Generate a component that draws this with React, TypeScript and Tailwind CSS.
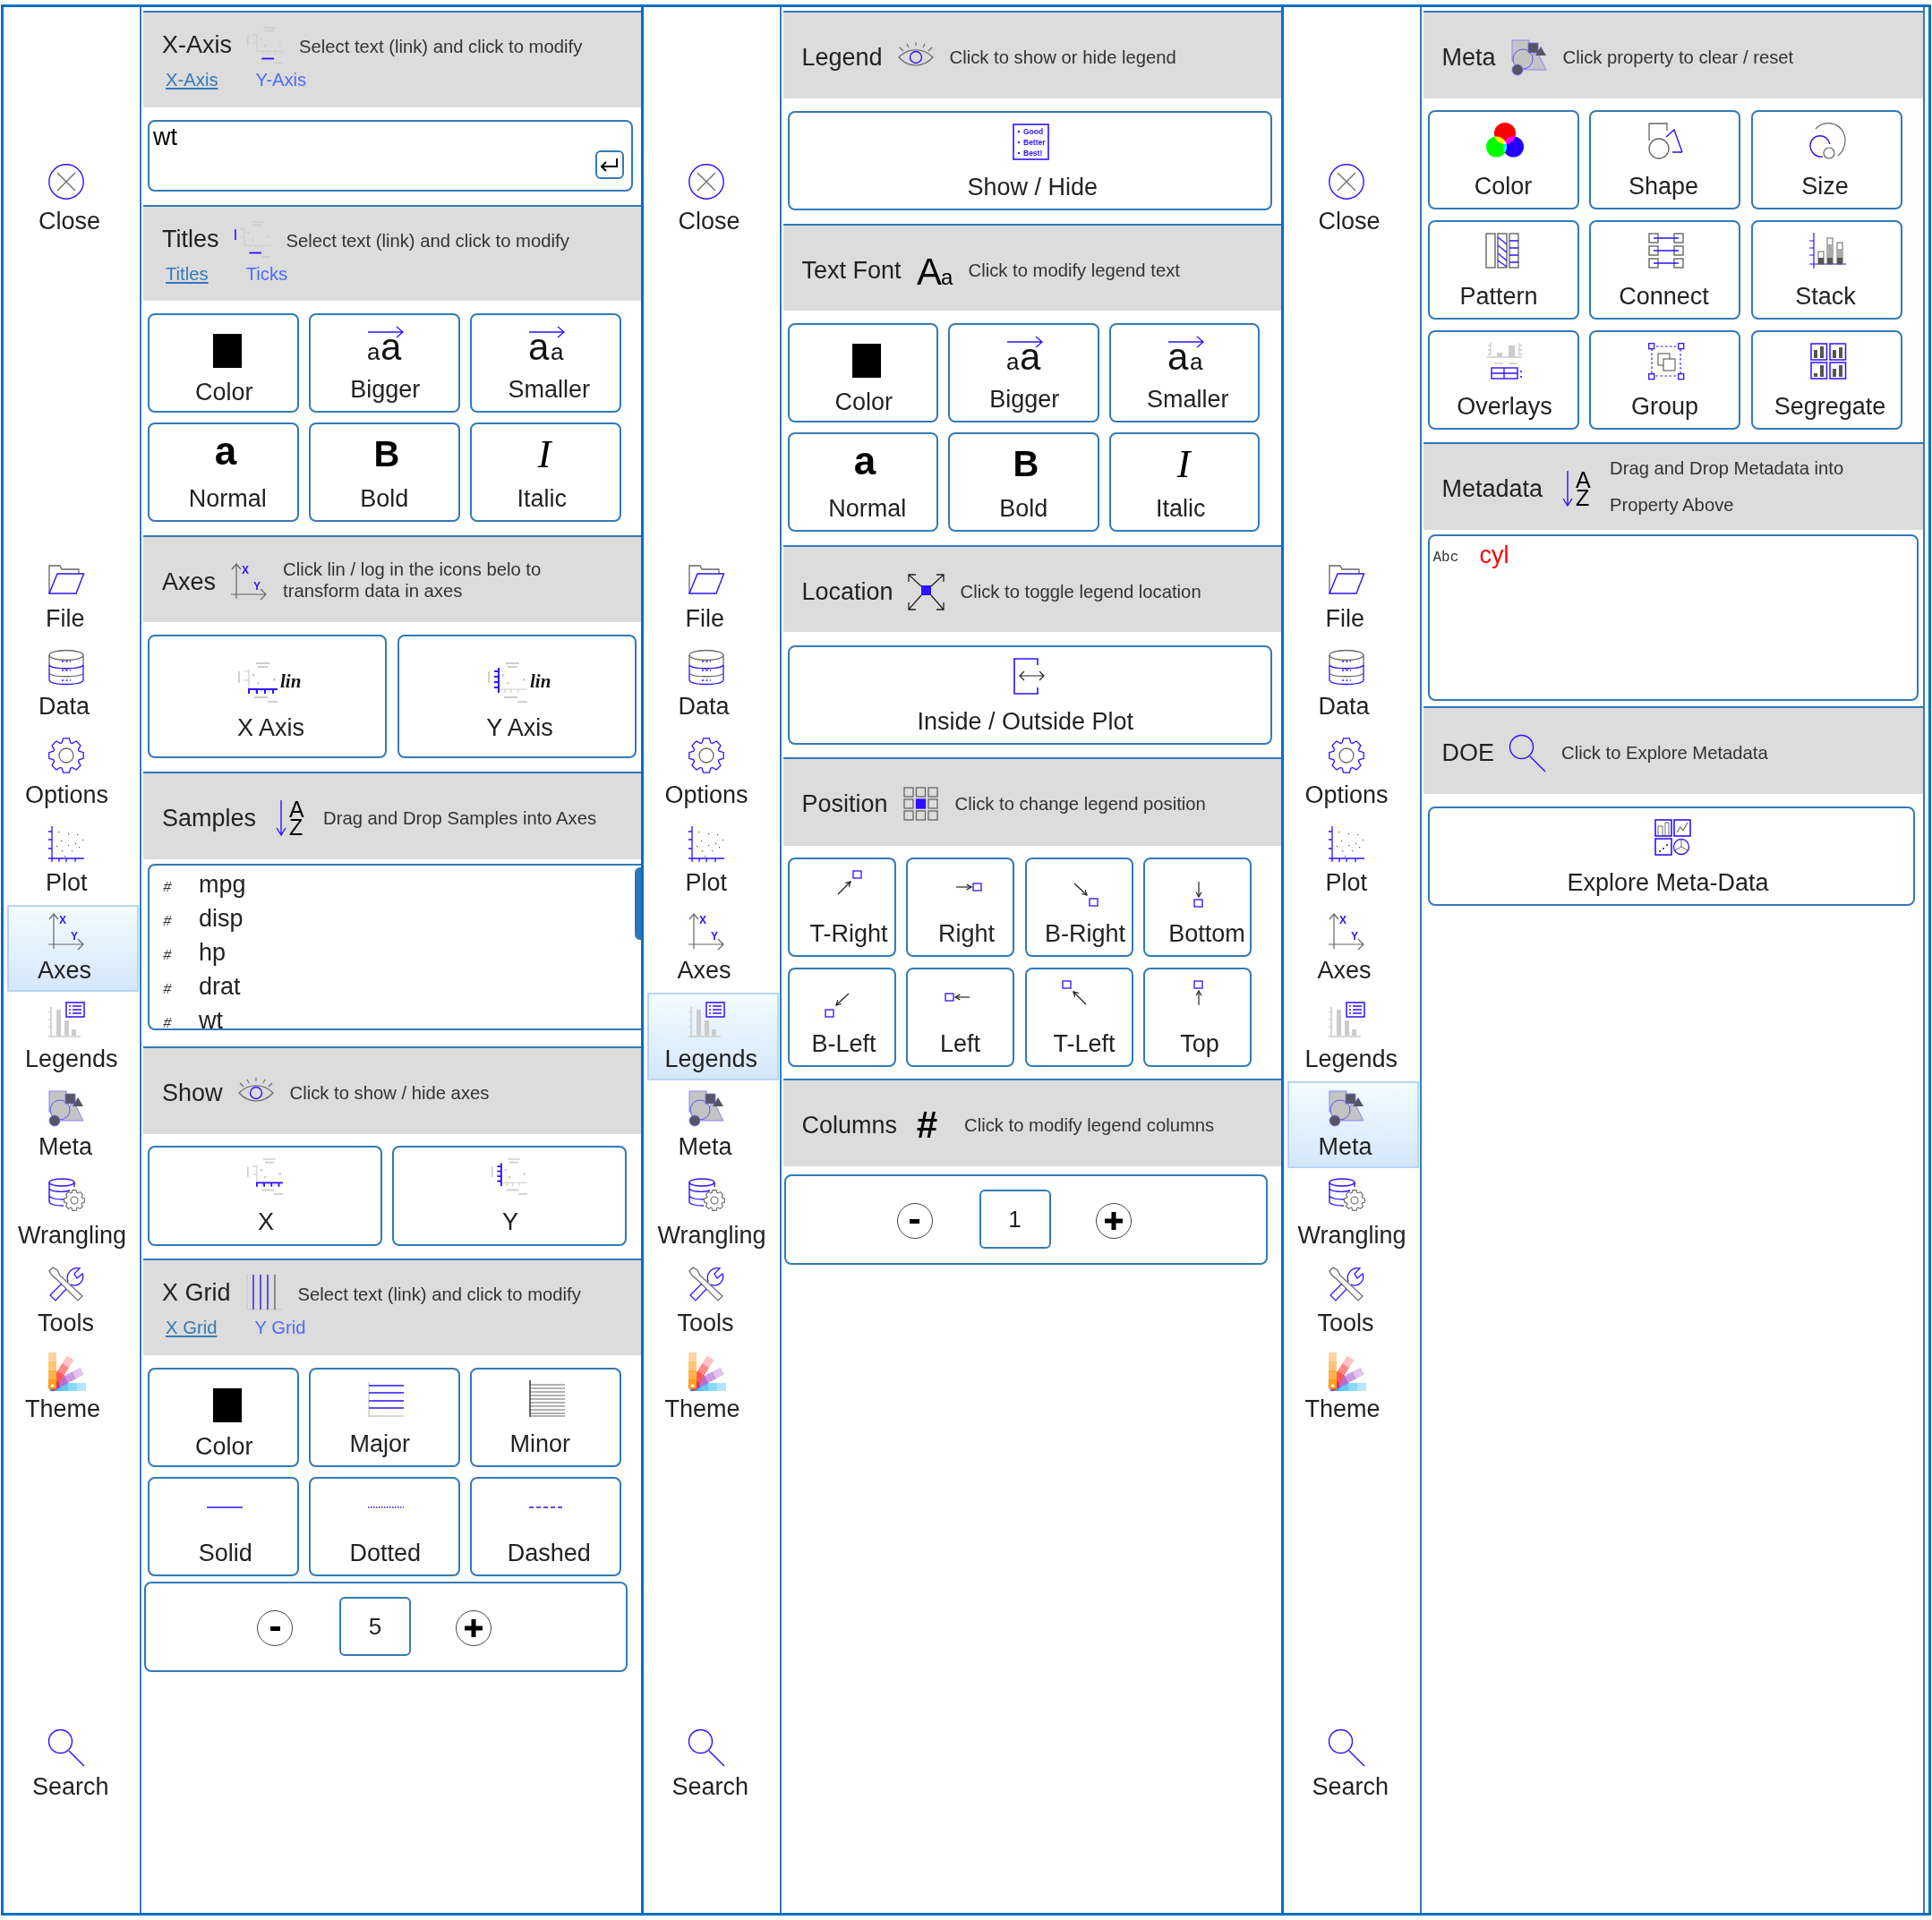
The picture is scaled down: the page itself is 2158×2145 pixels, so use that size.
import React from "react";

const B = "#2d12ff";
const G = "#666666";
const L = "#cccccc";

function gear(cx: number, cy: number, r1: number, r2: number, n: number) {
  const pts: string[] = [];
  for (let i = 0; i < n; i++) {
    const a = (i / n) * Math.PI * 2;
    const w = (Math.PI * 2) / n;
    const seq: [number, number][] = [
      [r2, a - w * 0.42],
      [r1, a - w * 0.22],
      [r1, a + w * 0.22],
      [r2, a + w * 0.42],
    ];
    for (const [r, t] of seq) pts.push(`${(cx + r * Math.cos(t)).toFixed(2)} ${(cy + r * Math.sin(t)).toFixed(2)}`);
  }
  return "M" + pts.join("L") + "Z";
}

type SP = { w?: number; h?: number; vb?: string; children?: React.ReactNode };
const S = ({ w = 40, h = 40, vb, children }: SP) => (
  <svg width={w} height={h} viewBox={vb ?? `0 0 ${w} ${h}`} fill="none" className="block shrink-0 overflow-visible">
    {children}
  </svg>
);

const CloseI = () => (
  <S>
    <circle cx="20" cy="20" r="19.2" stroke={B} strokeWidth="1.4" />
    <path d="M10 10L30 30M30 10L10 30" stroke={G} strokeWidth="1.2" />
  </S>
);
const FileI = () => (
  <S>
    <path d="M1 36V5H13L15 9H34V14" stroke={G} strokeWidth="1.3" />
    <path d="M1 36L10 14H39.5L31 36Z" stroke={B} strokeWidth="1.4" />
  </S>
);
const DataI = () => (
  <S>
    <ellipse cx="20" cy="6" rx="19" ry="5.5" stroke={G} strokeWidth="1.3" />
    <path d="M1 6V17C4 22 36 22 39 17V6" stroke={G} strokeWidth="1.3" />
    <path d="M1 17C4 22 36 22 39 17M1 17V34C4 40 36 40 39 34V17" stroke={B} strokeWidth="1.3" />
    <path d="M1 26C4 31 36 31 39 26" stroke={G} strokeWidth="1.3" />
    <path d="M15 13H25M15 23H25M15 34H25" stroke={B} strokeWidth="1.4" strokeDasharray="2 2.5" />
  </S>
);
const OptionsI = () => (
  <S>
    <path d={gear(20, 20, 19.5, 15, 8)} stroke={B} strokeWidth="1.3" />
    <circle cx="20" cy="20" r="8" stroke={G} strokeWidth="1.3" />
  </S>
);
const PlotI = () => (
  <S>
    <path d="M4 0V40M0 36H40M0 6H4M0 15H4M0 25H4M12 36V40M20 36V40M30 36V40" stroke={B} strokeWidth="1.3" />
    {[[11, 6], [22, 8], [32, 9], [38, 15], [30, 19], [22, 21], [14, 16], [15, 27], [26, 27], [34, 23], [18, 33], [9, 22]].map(([x, y], i) => (
      <rect key={i} x={x} y={y} width="1.2" height="1.2" fill="#555" />
    ))}
  </S>
);
const AxesI = () => (
  <S>
    <path d="M6 0V39" stroke={G} strokeWidth="1.2" />
    <path d="M1 6L6 0L11 6M0 34H39M33 28L39 34L33 40" stroke={G} strokeWidth="1.2" />
    <text x="12" y="11" fontSize="12" fontWeight="700" fill={B}>X</text>
    <text x="25" y="29" fontSize="12" fontWeight="700" fill={B}>Y</text>
  </S>
);
const LegendsI = () => (
  <S>
    <path d="M3 6V39M0 39H36" stroke={L} strokeWidth="1.6" />
    <path d="M0 12H3M0 20H3M0 28H3" stroke={L} strokeWidth="1" />
    <rect x="9" y="9" width="5" height="29" fill={L} />
    <rect x="18" y="21" width="5" height="17" fill={L} />
    <rect x="26" y="31" width="5" height="7" fill={L} />
    <rect x="20" y="1" width="20" height="16" fill="#fff" stroke={B} strokeWidth="1.5" />
    <path d="M23 5H25M27 5H37M23 9H25M27 9H37M23 13H25M27 13H37" stroke={B} strokeWidth="1.3" />
  </S>
);
const MetaI = () => (
  <S>
    <rect x="1" y="1" width="19" height="23" fill="#c4c4c4" stroke="#8b86ee" strokeWidth="1" />
    <path d="M28 12L39 34H14Z" fill="#c4c4c4" stroke="#8b86ee" strokeWidth="1" />
    <ellipse cx="13" cy="22" rx="11" ry="11" fill="#c4c4c4" stroke="#5c55f0" strokeWidth="1" />
    <rect x="19" y="4" width="11" height="11" fill="#555566" stroke="#7771ee" strokeWidth="0.8" />
    <path d="M33 8L39 18H27Z" fill="#555566" />
    <ellipse cx="7" cy="34" rx="6" ry="6" fill="#555566" stroke="#7771ee" strokeWidth="0.8" />
  </S>
);
const WranglingI = () => (
  <S>
    <ellipse cx="15" cy="5" rx="14" ry="4" stroke={B} strokeWidth="1.4" />
    <path d="M1 5V27C3 31 12 31 17 31M29 5V10M1 12C3 16 18 16 24 14M1 20C3 24 12 24 17 24" stroke={B} strokeWidth="1.4" />
    <path d={gear(29, 25, 11.5, 9, 8)} stroke={G} strokeWidth="1.1" fill="#fff" />
    <circle cx="29" cy="25" r="4" stroke={G} strokeWidth="1.1" />
  </S>
);
const ToolsI = () => (
  <S>
    <path d="M1 5L5 1L10 4L13 10L38 33L33 38L9 14L4 10Z" stroke={G} strokeWidth="1.2" fill="none" />
    <path d="M20 25L8 38L2 32L15 19" stroke={B} strokeWidth="1.2" />
    <path d="M22 17C19 8 26 0 35 2L29 8L32 13L38 8C41 16 33 24 25 20" stroke={B} strokeWidth="1.3" />
  </S>
);
const ThemeI = () => {
  const strips = [
    { a: 0, c: ["#ffd3a0", "#ffc678", "#ffb347", "#ff9f1c"] },
    { a: 32, c: ["#ffc1c1", "#ff8a8a", "#ff5a5a", "#f0303a"] },
    { a: 62, c: ["#e3c3ec", "#cf9ae0", "#b96cd0", "#9d3bc0"] },
    { a: 90, c: ["#b5e6fb", "#8ad8f8", "#5fc8f4", "#35b4ee"] },
  ];
  return (
    <div className="-mt-[2px]">
      <S w={40} h={42}>
        {strips.slice().reverse().map((s) => (
          <g key={s.a} transform={`rotate(${s.a} 4 38)`}>
            {s.c.map((c, i) => (
              <rect key={i} x="0" y={i * 10} width="9" height="10.5" fill={c} />
            ))}
          </g>
        ))}
        <circle cx="4.5" cy="37" r="1.8" fill="#fff" />
      </S>
    </div>
  );
};
const SearchI = () => (
  <S w={40} h={41}>
    <circle cx="13.5" cy="13.5" r="13" stroke={B} strokeWidth="1.4" />
    <path d="M23 24L40 41" stroke={B} strokeWidth="1.4" />
  </S>
);

const PlotBody = ({ xBlue, yBlue, labelBlue, titleBlue }: { xBlue?: boolean; yBlue?: boolean; labelBlue?: boolean; titleBlue?: boolean }) => (
  <>
    <path d="M20 1H35M22 5H33" stroke={L} strokeWidth="1.8" />
    <path d="M1 10V23" stroke={titleBlue ? B : L} strokeWidth="1.8" />
    <path d="M12 8V30M7 10H12M7 20H12" stroke={L} strokeWidth="1.2" />
    <path d="M12 30H44M19 30V34M26 30V34M34 30V34" stroke={L} strokeWidth="1.2" />
    <rect x="16" y="13" width="2.5" height="2.5" fill={L} />
    <rect x="21" y="22" width="2.5" height="2.5" fill={L} />
    <rect x="39" y="18" width="2.5" height="2.5" fill={L} />
    <path d="M18 39H33" stroke={labelBlue ? B : L} strokeWidth="2" />
    <path d="M33 44H44" stroke={L} strokeWidth="1.8" />
    {xBlue && <path d="M11 30H44M12 30V35M21 30V35M30 30V35M39 30V35" stroke={B} strokeWidth="2" />}
    {yBlue && <path d="M12 6V34M7 10H12M7 16H12M7 22H12M7 28H12" stroke={B} strokeWidth="2" />}
  </>
);
const PlotMini = (p: { xBlue?: boolean; yBlue?: boolean; labelBlue?: boolean; titleBlue?: boolean }) => (
  <S w={40} h={41} vb="0 0 44 45">
    <PlotBody {...p} />
  </S>
);
const PlotLin = (p: { xBlue?: boolean; yBlue?: boolean }) => (
  <S w={69} h={45} vb="0 0 69 45">
    <PlotBody {...p} />
    <text x="47" y="28" fontSize="21" fontStyle="italic" fontWeight="700" fill="#111" className="font-['Liberation_Serif',serif]">lin</text>
  </S>
);
const EyeI = () => (
  <div className="-mt-[6px]">
    <S w={40} h={28}>
      <path d="M1 17C12 6 28 6 39 17C28 29 12 29 1 17Z" stroke={G} strokeWidth="1.2" />
      <circle cx="20" cy="17" r="6.5" stroke={B} strokeWidth="1.4" />
      <path d="M20 0V4M10 2L12 6M30 2L28 6M2 6L6 10M38 6L34 10" stroke={G} strokeWidth="1.1" />
    </S>
  </div>
);
const AzI = () => (
  <S>
    <path d="M11 0V38M6 31L11 39L16 31" stroke={B} strokeWidth="1.4" />
    <text x="20" y="19" fontSize="25" fill="#000">A</text>
    <text x="20" y="39" fontSize="25" fill="#000">Z</text>
  </S>
);
const AxesHeadI = AxesI;
const GridVI = () => (
  <S>
    <path d="M1 0V39H40" stroke={L} strokeWidth="1.6" />
    <path d="M8 0V39M16 0V39M24 0V39" stroke={B} strokeWidth="1.4" />
    <path d="M32 0V39" stroke={G} strokeWidth="1.4" />
  </S>
);
const AaI = () => (
  <S>
    <text x="0" y="36" fontSize="42" fill="#000">A</text>
    <text x="27" y="36" fontSize="24" fill="#000">a</text>
  </S>
);
const LocationI = () => (
  <S w={41} h={41}>
    <rect x="15" y="13" width="11" height="11" fill={B} />
    <path d="M15 14L1 1M1 9V1H9M26 14L40 1M32 1H40V9M15 24L1 40M1 32V40H9M26 24L40 40M32 40H40V32" stroke="#222" strokeWidth="1.3" />
  </S>
);
const PositionI = () => (
  <S w={39} h={38}>
    {[0, 1, 2].flatMap((r) =>
      [0, 1, 2].map((c) => (
        <rect
          key={`${r}${c}`}
          x={1 + c * 13.5}
          y={1 + r * 13}
          width="10"
          height="10"
          fill={r === 1 && c === 1 ? B : "none"}
          stroke={r === 1 && c === 1 ? B : G}
          strokeWidth="1.3"
        />
      ))
    )}
  </S>
);
const BlackSquare = () => <div className="w-[32px] h-[38px] bg-black mt-[9px]" />;
const BiggerI = () => (
  <S w={40} h={41}>
    <path d="M0 7H39M32 1L39 7L32 13" stroke={B} strokeWidth="1.3" />
    <text x="-1" y="38" fontSize="26" fill="#111">a</text>
    <text x="14" y="38" fontSize="42" fill="#111">a</text>
  </S>
);
const SmallerI = () => (
  <S w={40} h={41}>
    <path d="M0 7H39M32 1L39 7L32 13" stroke={B} strokeWidth="1.3" />
    <text x="-1" y="38" fontSize="42" fill="#111">a</text>
    <text x="24" y="38" fontSize="26" fill="#111">a</text>
  </S>
);
const NormalI = () => (
  <S w={40} h={41}>
    <text x="20" y="33" fontSize="44" fontWeight="700" textAnchor="middle" fill="#000">a</text>
  </S>
);
const BoldI = () => (
  <S w={40} h={41}>
    <text x="20" y="35" fontSize="40" fontWeight="700" textAnchor="middle" fill="#000">B</text>
  </S>
);
const ItalicI = () => (
  <S w={40} h={41}>
    <text x="20" y="36" fontSize="44" fontStyle="italic" textAnchor="middle" fill="#000" className="font-['Liberation_Serif',serif]">I</text>
  </S>
);
const MajorI = () => (
  <S w={40} h={41}>
    <path d="M1 2V41M0 40H40" stroke={L} strokeWidth="1.4" />
    <path d="M1 6H40M1 14H40M1 23H40M1 31H40" stroke={B} strokeWidth="1.3" />
  </S>
);
const MinorI = () => (
  <S w={40} h={41}>
    <path d="M1 0V41" stroke={G} strokeWidth="2" />
    <path d="M1 5H40M1 9H40M1 13H40M1 17H40M1 21H40M1 25H40M1 29H40M1 33H40M1 37H40M1 40H40" stroke={G} strokeWidth="1.1" />
  </S>
);
const LineI = ({ dash }: { dash?: string }) => (
  <S w={40} h={41}>
    <path d="M0 20H40" stroke={B} strokeWidth="1.6" strokeDasharray={dash} />
  </S>
);
const EnterI = () => (
  <S w={22} h={18}>
    <path d="M19 2V11H2M7 6L2 11L7 16" stroke="#000" strokeWidth="2" />
  </S>
);
const ShowHideI = () => (
  <S w={41} h={41}>
    <rect x="1" y="1" width="39" height="39" stroke={B} strokeWidth="1.6" />
    <g fill={B} fontSize="8.5" fontWeight="700">
      <rect x="6" y="8" width="2" height="2" />
      <rect x="6" y="20" width="2" height="2" />
      <rect x="6" y="32" width="2" height="2" />
      <text x="12" y="12">Good</text>
      <text x="12" y="24">Better</text>
      <text x="12" y="36">Best!</text>
    </g>
  </S>
);
const InOutI = () => (
  <S w={36} h={41}>
    <path d="M27 8V1H1V40H27V33" stroke={B} strokeWidth="1.6" />
    <path d="M7 20H34M12 15L7 20L12 25M29 15L34 20L29 25" stroke="#222" strokeWidth="1.2" />
  </S>
);

type Dir = { sq: [number, number]; l: [number, number, number, number] };
const Head = ({ l }: { l: [number, number, number, number] }) => {
  const a = Math.atan2(l[3] - l[1], l[2] - l[0]);
  const p = (d: number) => `${(l[2] - 6 * Math.cos(a + d)).toFixed(2)} ${(l[3] - 6 * Math.sin(a + d)).toFixed(2)}`;
  return <path d={`M${p(0.5)}L${l[2]} ${l[3]}L${p(-0.5)}`} stroke="#222" strokeWidth="1.2" />;
};
const PosI = ({ sq, l }: Dir) => (
  <S w={28} h={41}>
    <rect x={sq[0]} y={sq[1]} width="9" height="8" stroke={B} strokeWidth="1.3" />
    <path d={`M${l[0]} ${l[1]}L${l[2]} ${l[3]}`} stroke="#222" strokeWidth="1.2" />
    <Head l={l} />
  </S>
);

const RgbI = () => (
  <S>
    <g className="isolate">
      <circle cx="20" cy="12" r="12" fill="#ff0000" className="mix-blend-screen" />
      <circle cx="10.5" cy="27" r="11.5" fill="#00ff00" className="mix-blend-screen" />
      <circle cx="29.5" cy="27" r="11.5" fill="#2200ff" className="mix-blend-screen" />
    </g>
  </S>
);
const ShapeI = () => (
  <S>
    <path d="M1 20V1H21V9" stroke={G} strokeWidth="1.3" />
    <path d="M38 33H27M20 16L29 8L38 33" stroke={B} strokeWidth="1.4" />
    <circle cx="12" cy="29" r="11" stroke={G} strokeWidth="1.3" />
  </S>
);
const SizeI = () => (
  <S>
    <path d="M6 7C16 -5 39 0 39 20C39 28 36 33 31 37" stroke={G} strokeWidth="1.2" />
    <path d="M14 38C6 39 0 33 0 25C1 12 19 11 22 24" stroke={B} strokeWidth="1.4" />
    <circle cx="21" cy="34" r="6" stroke={G} strokeWidth="1.2" />
  </S>
);
const PatternI = () => (
  <S>
    <rect x="1" y="1" width="10" height="38" stroke={G} strokeWidth="1.4" />
    <rect x="14" y="1" width="10" height="38" stroke={G} strokeWidth="1.4" />
    <rect x="27" y="1" width="10" height="38" stroke={G} strokeWidth="1.4" />
    <path d="M14 5L24 13M14 14L24 22M14 23L24 31M14 31L24 38" stroke={B} strokeWidth="1.3" />
    <path d="M27 9H37M27 17H37M27 25H37M27 33H37" stroke={B} strokeWidth="1.3" />
  </S>
);
const ConnectI = () => (
  <S>
    {[1, 15, 29].flatMap((y) =>
      [1, 29].map((x) => <rect key={`${x}${y}`} x={x} y={y} width="10" height="10" stroke={G} strokeWidth="1.4" />)
    )}
    <path d="M6 6H34M6 20H34M6 34H34" stroke={B} strokeWidth="1.3" />
  </S>
);
const StackI = () => (
  <S w={41} h={41}>
    <path d="M5 0V40M0 35H41M0 9H5M0 17H5M0 25H5" stroke={B} strokeWidth="1.2" />
    {[
      [10, 21],
      [20, 6],
      [31, 11],
    ].map(([x, y], i) => (
      <g key={i}>
        <rect x={x} y={y} width="6" height={35 - y} stroke={G} strokeWidth="1" />
        <rect x={x} y={y + 7} width="6" height={28 - y - 7 + 0.5} fill="#aaa" />
        <rect x={x} y={28} width="6" height="7" fill="#555" />
      </g>
    ))}
  </S>
);
const OverlaysI = () => (
  <S w={40} h={41}>
    <path d="M4 0V14M1 3H4M1 8H4M1 13H4M36 0V14M36 3H39M36 8H39M36 13H39M0 16H39" stroke={L} strokeWidth="1.3" />
    <rect x="11" y="11" width="6" height="5" fill={L} />
    <rect x="24" y="3" width="7" height="13" fill={L} />
    <path d="M8 23H18M24 23H33" stroke={L} strokeWidth="1.4" />
    <rect x="5" y="28" width="29" height="12" stroke={B} strokeWidth="1.4" />
    <path d="M5 34H34M19 28V40" stroke={B} strokeWidth="1.3" />
    <path d="M38 31V33M38 37V39" stroke={B} strokeWidth="1.6" />
  </S>
);
const GroupI = () => (
  <S w={40} h={41}>
    <rect x="4" y="4" width="32" height="33" stroke={B} strokeWidth="1.2" strokeDasharray="2.5 2.5" />
    {[[0, 0], [33, 0], [0, 34], [33, 34]].map(([x, y]) => (
      <rect key={`${x}${y}`} x={x + 0.7} y={y + 0.7} width="6" height="6" fill="#fff" stroke={B} strokeWidth="1.3" />
    ))}
    <rect x="11" y="12" width="13" height="13" stroke={G} strokeWidth="1.2" />
    <rect x="17" y="18" width="13" height="13" fill="#fff" stroke={G} strokeWidth="1.2" />
  </S>
);
const SegregateI = () => (
  <S w={40} h={41}>
    {[[1, 1], [22, 1], [1, 22], [22, 22]].map(([x, y], i) => (
      <g key={i}>
        <rect x={x} y={y} width="17.5" height="18" stroke={B} strokeWidth="1.5" />
        <rect x={x + 3} y={y + (i === 2 ? 12 : 7)} width="4" height={i === 2 ? 4 : 9} fill="#555" />
        <rect x={x + 10} y={y + (i === 1 ? 4 : 3)} width="4" height={i === 1 ? 12 : 13} fill="#555" />
      </g>
    ))}
  </S>
);
const ExploreI = () => (
  <S w={40} h={41}>
    <rect x="1" y="1" width="18" height="18" stroke={B} strokeWidth="1.6" />
    <rect x="22" y="1" width="18" height="18" stroke={B} strokeWidth="1.6" />
    <rect x="1" y="22" width="18" height="18" stroke={B} strokeWidth="1.6" />
    <circle cx="30" cy="31" r="8.5" stroke={B} strokeWidth="1.3" />
    <path d="M30 22V31L37 35M30 31L23 35" stroke={G} strokeWidth="1" />
    <path d="M4 18V8H9V18M12 18V4H16V18" stroke={G} strokeWidth="1" />
    <path d="M25 15L29 9L32 13L37 4" stroke={G} strokeWidth="1.2" />
    <path d="M5 36H7M9 33H11M13 29H15" stroke="#555" strokeWidth="2" />
  </S>
);

/* ---------- layout pieces ---------- */

const NAV = [
  { label: "File", I: FileI, l: "ml-[41px]" },
  { label: "Data", I: DataI, l: "ml-[33px]" },
  { label: "Options", I: OptionsI, l: "ml-[18px]" },
  { label: "Plot", I: PlotI, l: "ml-[41px]" },
  { label: "Axes", I: AxesI, l: "ml-[32px]" },
  { label: "Legends", I: LegendsI, l: "ml-[18px]" },
  { label: "Meta", I: MetaI, l: "ml-[33px]" },
  { label: "Wrangling", I: WranglingI, l: "ml-[10px]" },
  { label: "Tools", I: ToolsI, l: "ml-[32px]" },
  { label: "Theme", I: ThemeI, l: "ml-[18px]" },
];

const NavItem = ({ label, I, l, active }: { label: string; I: React.FC; l: string; active?: boolean }) => (
  <div
    className={
      "ml-[4px] w-[147px] h-[97.4px] mb-[1px] pt-[8px] border-2 " +
      (active ? "border-[#b7d4f5] bg-linear-to-b from-[#f2fcff] to-[#d5e7fb]" : "border-transparent")
    }
  >
    <div className="ml-[44px] h-[40px]">
      <I />
    </div>
    <div className={"mt-[8.5px] leading-[31px] text-[27px] text-[#222] whitespace-nowrap " + l}>{label}</div>
  </div>
);

const Sidebar = ({ active }: { active: string }) => (
  <div className="w-[154px] shrink-0 border-r-2 border-[#337ab7] pt-[165px] flex flex-col">
    <NavItem label="Close" I={CloseI} l="ml-[33px]" />
    <div className="mt-[346px]">
      {NAV.map((n) => (
        <NavItem key={n.label} {...n} active={n.label === active} />
      ))}
    </div>
    <div className="mt-[321px]">
      <NavItem label="Search" I={SearchI} l="ml-[26px]" />
    </div>
  </div>
);

const Head2 = ({
  title,
  icon,
  desc,
  links,
  cls,
}: {
  title: string;
  icon: React.ReactNode;
  desc: React.ReactNode;
  links?: [string, string];
  cls: string;
}) => (
  <div className={"border-t-2 border-[#337ab7] bg-[#dcdcdc] pl-[21px] " + cls}>
    <div className={"flex items-center " + (links ? "pt-[10px] h-[62px]" : "h-[100px]")}>
      <span className="text-[27px] text-[#222] leading-[31px] whitespace-nowrap">{title}</span>
      <div className="ml-[17px] w-[40px] flex justify-center shrink-0">{icon}</div>
      <div className={"ml-[18px] text-[20.25px] text-[#333] " + (links ? "mt-[4px]" : "")}>{desc}</div>
    </div>
    {links && (
      <div className="flex gap-[42px] pl-[4px] text-[20.25px] leading-[26px]">
        <span className="text-[#337ab7] underline">{links[0]}</span>
        <span className="text-[#4d6cf5]">{links[1]}</span>
      </div>
    )}
  </div>
);

const Tile = ({
  icon,
  label,
  cls,
  iconCls = "",
  labelCls = "",
}: {
  icon: React.ReactNode;
  label: string;
  cls?: string;
  iconCls?: string;
  labelCls?: string;
}) => (
  <div className={"flex flex-col items-center h-[111px] border-2 border-[#337ab7] rounded-[8px] pt-[12px] bg-white " + (cls ?? "")}>
    <div className={"h-[41px] flex justify-center " + iconCls}>{icon}</div>
    <div className={"text-[27px] leading-[31px] text-[#222] whitespace-nowrap " + (labelCls.includes("mt-") ? "" : "mt-[14.5px] ") + labelCls}>{label}</div>
  </div>
);

const ColorTile = () => <Tile icon={<BlackSquare />} label="Color" iconCls="ml-[9px]" labelCls="mt-[17.5px] ml-[2px]" />;

const FontGrid = ({ cls }: { cls: string }) => (
  <div className={"grid gap-y-[11px] ml-[5px] " + cls}>
    <ColorTile />
    <Tile icon={<BiggerI />} label="Bigger" iconCls="ml-[4px]" labelCls="ml-[2px]" />
    <Tile icon={<SmallerI />} label="Smaller" iconCls="ml-[4px]" labelCls="ml-[8px]" />
    <Tile icon={<NormalI />} label="Normal" iconCls="ml-[5px]" labelCls="ml-[10px]" />
    <Tile icon={<BoldI />} label="Bold" iconCls="ml-[5px]" />
    <Tile icon={<ItalicI />} label="Italic" iconCls="mr-[2px]" labelCls="mr-[8px]" />
  </div>
);

const Stepper = ({ value, cls }: { value: string; cls: string }) => (
  <div className={"ml-[1px] w-[540px] h-[101px] border-2 border-[#337ab7] rounded-[8px] flex items-start " + cls}>
    <div className="ml-[124px] mt-[30px] w-[40px] h-[40px] rounded-full border-[1.5px] border-[#444] flex items-center justify-center">
      <div className="w-[11px] h-[5px] bg-black" />
    </div>
    <div className="ml-[52px] mt-[15px] w-[80px] h-[66px] border-2 border-[#337ab7] rounded-[6px] flex items-center justify-center text-[26px] text-[#222]">
      {value}
    </div>
    <div className="ml-[50px] mt-[30px] w-[40px] h-[40px] rounded-full border-[1.5px] border-[#444] flex items-center justify-center">
      <S w={24} h={24}>
        <path d="M12 2V22M2 12H22" stroke="#000" strokeWidth="5" />
      </S>
    </div>
  </div>
);

const SAMPLES = ["mpg", "disp", "hp", "drat", "wt"];

const Panel1 = () => (
  <div className="flex-1 pl-[2px] pt-[4px] min-w-0">
    <Head2 cls="h-[108px]" title="X-Axis" icon={<PlotMini labelBlue />} desc="Select text (link) and click to modify" links={["X-Axis", "Y-Axis"]} />
    <div className="mt-[14px] ml-[5px] w-[542px] h-[80px] border-2 border-[#337ab7] rounded-[8px] flex justify-between pl-[4px]">
      <span className="text-[27px] leading-[34px] text-black">wt</span>
      <div className="self-end mb-[12px] mr-[8px] w-[32px] h-[32px] border-2 border-[#337ab7] rounded-[6px] flex items-center justify-center">
        <EnterI />
      </div>
    </div>

    <Head2 cls="mt-[15px] h-[107px]" title="Titles" icon={<PlotMini labelBlue titleBlue />} desc="Select text (link) and click to modify" links={["Titles", "Ticks"]} />
    <div className="mt-[14px]">
      <FontGrid cls="grid-cols-[168.5px_168.5px_168.5px] gap-x-[11.5px]" />
    </div>

    <Head2
      cls="mt-[15px] h-[97px]"
      title="Axes"
      icon={<AxesHeadI />}
      desc={
        <div className="leading-[24px] -mt-[4px]">
          Click lin / log in the icons belo to
          <br />
          transform data in axes
        </div>
      }
    />
    <div className="mt-[14px] ml-[5px] grid grid-cols-[267px_267px] gap-x-[12px]">
      <Tile cls="h-[138px] pt-[29px]" icon={<PlotLin xBlue />} label="X Axis" iconCls="h-[45px] ml-[4px]" labelCls="ml-[8px] mt-[12.5px]" />
      <Tile cls="h-[138px] pt-[29px]" icon={<PlotLin yBlue />} label="Y Axis" iconCls="h-[45px] ml-[3px]" labelCls="ml-[6px] mt-[12.5px]" />
    </div>

    <Head2 cls="mt-[15px] h-[98px]" title="Samples" icon={<AzI />} desc="Drag and Drop Samples into Axes" />
    <div className="mt-[5px] ml-[5px] h-[186px] border-2 border-r-0 border-[#337ab7] rounded-l-[8px] overflow-hidden flex justify-between pt-[2px]">
      <div className="pl-[15px]">
        {SAMPLES.map((s) => (
          <div key={s} className="flex items-center h-[38px]">
            <span className="w-[40px] mt-[8px] text-[16px] italic text-[#333] font-['Liberation_Mono',monospace]">#</span>
            <span className="text-[27px] text-[#222]">{s}</span>
          </div>
        ))}
      </div>
      <div className="w-[7px] h-[81px] bg-[#2e75b6] rounded-l-[6px]" />
    </div>

    <Head2 cls="mt-[18px] h-[98px]" title="Show" icon={<EyeI />} desc="Click to show / hide axes" />
    <div className="mt-[13px] ml-[5px] grid grid-cols-[262px_262px] gap-x-[11px]">
      <Tile cls="h-[112px]" icon={<PlotMini xBlue />} label="X" labelCls="ml-[2px]" />
      <Tile cls="h-[112px]" icon={<PlotMini yBlue />} label="Y" labelCls="ml-[2px]" />
    </div>

    <Head2 cls="mt-[14px] h-[108px]" title="X Grid" icon={<GridVI />} desc="Select text (link) and click to modify" links={["X Grid", "Y Grid"]} />
    <div className="mt-[14px] ml-[5px] grid grid-cols-[168.5px_168.5px_168.5px] gap-x-[11.5px] gap-y-[11px]">
      <ColorTile />
      <Tile icon={<MajorI />} label="Major" iconCls="ml-[4px]" labelCls="mr-[10px]" />
      <Tile icon={<MinorI />} label="Minor" iconCls="ml-[4px]" labelCls="mr-[12px]" />
      <Tile icon={<LineI />} label="Solid" iconCls="ml-[4px]" labelCls="ml-[5px]" />
      <Tile icon={<LineI dash="1.5 1.5" />} label="Dotted" iconCls="ml-[4px]" labelCls="ml-[2px]" />
      <Tile icon={<LineI dash="5 3" />} label="Dashed" iconCls="ml-[4px]" labelCls="ml-[8px]" />
    </div>
    <Stepper value="5" cls="mt-[6px]" />
  </div>
);

const Panel2 = () => (
  <div className="flex-1 pl-[2px] pt-[4px] min-w-0">
    <Head2 cls="h-[98px]" title="Legend" icon={<EyeI />} desc="Click to show or hide legend" />
    <div className="mt-[14px] ml-[5px] w-[541.5px]">
      <Tile cls="h-[110px]" icon={<ShowHideI />} label="Show / Hide" iconCls="ml-[2px]" labelCls="ml-[6px]" />
    </div>

    <Head2 cls="mt-[15px] h-[97px]" title="Text Font" icon={<AaI />} desc="Click to modify legend text" />
    <div className="mt-[14px]">
      <FontGrid cls="grid-cols-[168.5px_168.5px_168.5px] gap-x-[11px]" />
    </div>

    <Head2 cls="mt-[15px] h-[97px]" title="Location" icon={<LocationI />} desc="Click to toggle legend location" />
    <div className="mt-[15px] ml-[5px] w-[541.5px]">
      <Tile icon={<InOutI />} label="Inside / Outside Plot" labelCls="mr-[10px]" />
    </div>

    <Head2 cls="mt-[14px] h-[99px]" title="Position" icon={<PositionI />} desc="Click to change legend position" />
    <div className="mt-[13px] ml-[5px] grid grid-cols-[121px_121px_121px_121px] gap-x-[11.5px] gap-y-[12px]">
      <Tile cls="h-[110px]" label="T-Right" icon={<PosI sq={[18, 1]} l={[1, 27, 15, 13]} />} iconCls="ml-[18px]" labelCls="ml-[16px]" />
      <Tile cls="h-[110px]" label="Right" icon={<PosI sq={[19, 15]} l={[0, 19, 17, 19]} />} iconCls="ml-[18px]" labelCls="ml-[14px]" />
      <Tile cls="h-[110px]" label="B-Right" icon={<PosI sq={[18, 32]} l={[1, 15, 15, 28]} />} iconCls="ml-[16px]" labelCls="ml-[14px]" />
      <Tile cls="h-[110px]" label="Bottom" icon={<PosI sq={[9, 33]} l={[14, 13, 14, 30]} />} iconCls="ml-[3px]" labelCls="ml-[21px]" />
      <Tile cls="h-[110px]" label="B-Left" icon={<PosI sq={[1, 33]} l={[27, 15, 13, 28]} />} iconCls="mr-[10px]" labelCls="ml-[5px]" />
      <Tile cls="h-[110px]" label="Left" icon={<PosI sq={[1, 15]} l={[28, 19, 12, 19]} />} iconCls="mr-[8px]" />
      <Tile cls="h-[110px]" label="T-Left" icon={<PosI sq={[1, 1]} l={[27, 27, 13, 13]} />} iconCls="mr-[10px]" labelCls="ml-[12px]" />
      <Tile cls="h-[110px]" label="Top" icon={<PosI sq={[9, 1]} l={[14, 28, 14, 12]} />} iconCls="ml-[3px]" labelCls="ml-[5px]" />
    </div>

    <Head2 cls="mt-[13px] h-[98px]" title="Columns" icon={<span className="-ml-[8px] text-[42px] leading-[40px] font-bold italic text-black">#</span>} desc="Click to modify legend columns" />
    <Stepper value="1" cls="mt-[9px] h-[100px]" />
  </div>
);

const Panel3 = () => (
  <div className="w-[562px] shrink-0 border-r-2 border-[#337ab7] pl-[2px] pt-[4px]">
    <Head2 cls="h-[98px] mr-0" title="Meta" icon={<MetaI />} desc="Click property to clear / reset" />
    <div className="mt-[13px] ml-[5px] grid grid-cols-[169px_169px_169px] gap-x-[11.5px] gap-y-[12px]">
      <Tile icon={<RgbI />} label="Color" iconCls="ml-[3px]" />
      <Tile icon={<ShapeI />} label="Shape" iconCls="ml-[3px]" labelCls="mr-[3px]" />
      <Tile icon={<SizeI />} label="Size" iconCls="ml-[3px]" labelCls="mr-[3px]" />
      <Tile cls="h-[110px]" icon={<PatternI />} label="Pattern" labelCls="mr-[10px]" />
      <Tile cls="h-[110px]" icon={<ConnectI />} label="Connect" iconCls="ml-[3px]" labelCls="mr-[2px]" />
      <Tile cls="h-[110px]" icon={<StackI />} label="Stack" iconCls="ml-[3px]" labelCls="mr-[2px]" />
      <Tile icon={<OverlaysI />} label="Overlays" iconCls="ml-[3px]" labelCls="ml-[3px]" />
      <Tile icon={<GroupI />} label="Group" iconCls="ml-[3px]" />
      <Tile icon={<SegregateI />} label="Segregate" iconCls="ml-[3px]" labelCls="ml-[8px]" />
    </div>

    <Head2
      cls="mt-[14px] h-[98px]"
      title="Metadata"
      icon={<AzI />}
      desc={
        <div className="leading-[41px] -mt-[4px]">
          Drag and Drop Metadata into
          <br />
          Property Above
        </div>
      }
    />
    <div className="mt-[5px] ml-[5px] w-[548px] h-[186px] border-2 border-[#337ab7] rounded-[8px] flex items-start pl-[4px] pt-[6px]">
      <span className="w-[52px] mt-[6px] text-[16px] text-[#333] font-['Liberation_Mono',monospace]">Abc</span>
      <span className="text-[27px] leading-[31px] text-[#ff0000]">cyl</span>
    </div>

    <Head2 cls="mt-[6px] h-[98px]" title="DOE" icon={<SearchI />} desc="Click to Explore Metadata" />
    <div className="mt-[14px] ml-[5px] w-[544px]">
      <Tile icon={<ExploreI />} label="Explore Meta-Data" iconCls="ml-[3px]" labelCls="mr-[7px]" />
    </div>
  </div>
);

const Panel = ({ active, cls, children }: { active: string; cls: string; children: React.ReactNode }) => (
  <div className={"flex h-[2135px] border-l-[3px] border-y-[3px] border-[#0070c0] " + cls}>
    <Sidebar active={active} />
    {children}
  </div>
);

export default function App() {
  return (
    <div className="w-[2158px] h-[2145px] bg-white overflow-hidden pt-[5px] pl-[1px] flex font-['Liberation_Sans',Arial,sans-serif]">
      <Panel active="Axes" cls="w-[714.5px]">
        <Panel1 />
      </Panel>
      <Panel active="Legends" cls="w-[715px]">
        <Panel2 />
      </Panel>
      <Panel active="Meta" cls="w-[726.5px] border-r-[3px]">
        <Panel3 />
      </Panel>
    </div>
  );
}
